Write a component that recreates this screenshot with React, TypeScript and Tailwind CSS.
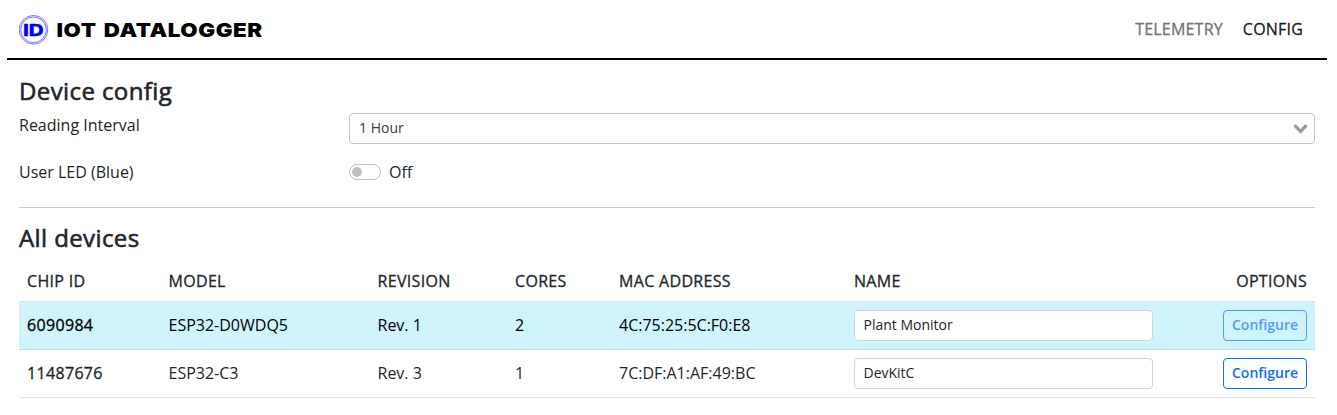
const devices = [
  { id: "6090984", model: "ESP32-D0WDQ5", rev: "Rev. 1", cores: 2, mac: "4C:75:25:5C:F0:E8", name: "Plant Monitor", active: true },
  { id: "11487676", model: "ESP32-C3", rev: "Rev. 3", cores: 1, mac: "7C:DF:A1:AF:49:BC", name: "DevKitC", active: false },
];

const columns = "grid grid-cols-[141.5px_209px_137.5px_104px_235px_315px_1fr] items-center px-2 border-b";
const mediumStroke = "[-webkit-text-stroke:0.3px_currentColor]";
const heading = "text-2xl leading-[29px] tracking-[0.4px] [-webkit-text-stroke:0.6px_currentColor]";

function Logo() {
  return (
    <svg width="246" height="32" viewBox="0 0 246 32" className="block" fontFamily="Inter, sans-serif" fontWeight="900">
      <circle cx="14.5" cy="16.8" r="14.3" fill="none" stroke="#0000ff" strokeWidth="0.55" />
      <circle cx="14.5" cy="16.8" r="12.8" fill="none" stroke="#0000ff" strokeWidth="0.55" />
      <text x="3.9" y="22.8" fontSize="15.8" fontWeight="800" fill="#0000ff" stroke="#0000ff" strokeWidth="0.3" textLength="20.8" lengthAdjust="spacingAndGlyphs">ID</text>
      <g fontSize="19" fill="#000" letterSpacing="0.5">
        <text x="37.5" y="24" textLength="40" lengthAdjust="spacingAndGlyphs">IOT</text>
        <text x="84.8" y="24" textLength="159" lengthAdjust="spacingAndGlyphs">DATALOGGER</text>
      </g>
    </svg>
  );
}

export default function App() {
  return (
    <div className="h-[415px] overflow-hidden bg-white pl-[7px] pr-[10px] font-['Open_Sans',sans-serif] text-base leading-6 text-[#212529]">
      <header className="flex h-[60px] items-center justify-between border-b-2 border-black pl-3 pr-6">
        <Logo />
        <nav className={"flex gap-5 tracking-[0.2px] " + mediumStroke}>
          <a className="text-[#737373]">TELEMETRY</a>
          <a className="text-black/90">CONFIG</a>
        </nav>
      </header>
      <main className="px-3 pt-4">
        <h2 className={heading}>Device config</h2>
        <div className="mt-2 flex">
          <div className="w-[330px]">Reading Interval</div>
          <div className="flex h-[31px] flex-1 items-center justify-between rounded border border-[#c6c6c6] pl-[9px] pr-[5px] text-sm text-[#393939]">
            <span className="pb-0.5">1 Hour</span>
            <svg width="17" height="17" viewBox="0 0 17 17" fill="none" stroke="#999" strokeWidth="3.2" strokeLinecap="round" strokeLinejoin="miter">
              <path d="M3.4 6.2l5.1 5.2 5.1-5.2" />
            </svg>
          </div>
        </div>
        <div className="mt-4 flex">
          <div className="w-[330px]">User LED (Blue)</div>
          <div className="flex items-center gap-2">
            <span className="flex h-4 w-8 items-center rounded-full border border-[#bfbfbf] px-[2px]">
              <span className="size-[10px] rounded-full bg-[#bfbfbf]" />
            </span>
            Off
          </div>
        </div>
        <hr className="mt-[23px] border-t border-[#c8c9ca]" />
        <h2 className={"mt-[15px] " + heading}>All devices</h2>
        <div className="mt-[9px]">
          <div className={columns + " h-[41px] border-[#dee2e6] tracking-[0.32px] " + mediumStroke}>
            <span>CHIP ID</span>
            <span>MODEL</span>
            <span>REVISION</span>
            <span>CORES</span>
            <span>MAC ADDRESS</span>
            <span>NAME</span>
            <span className="text-right">OPTIONS</span>
          </div>
          {devices.map((d) => (
            <div key={d.id} className={columns + " h-12 " + (d.active ? "border-[#badce3] bg-[#cff4fc] text-black" : "border-[#dee2e6]")}>
              <span className={"pb-px tracking-[0.33px] " + mediumStroke}>{d.id}</span>
              <span className="pb-px">{d.model}</span>
              <span className="pb-px">{d.rev}</span>
              <span className="pb-px">{d.cores}</span>
              <span className="pb-px">{d.mac}</span>
              <input
                defaultValue={d.name}
                className="h-[31px] w-[299px] rounded border border-[#ced4da] bg-white px-[8.5px] pb-0.5 text-sm text-[#212529]"
              />
              <button
                disabled={d.active}
                className="h-[31px] w-[84px] justify-self-end rounded border border-[#0d6efd] pb-0.5 text-sm font-semibold text-[#0d6efd] disabled:opacity-65"
              >
                Configure
              </button>
            </div>
          ))}
        </div>
      </main>
    </div>
  );
}
